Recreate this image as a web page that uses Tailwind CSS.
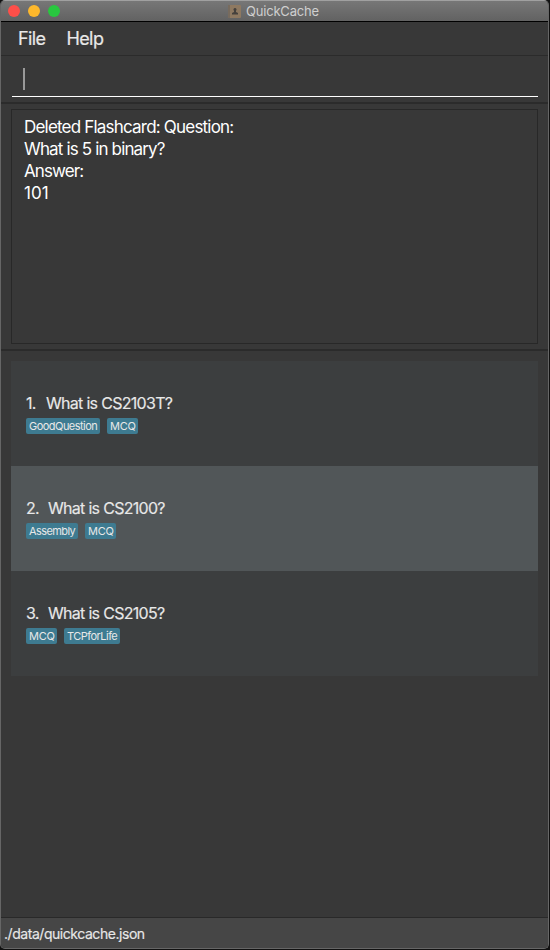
<!DOCTYPE html>
<html lang="en">
<head>
<meta charset="utf-8">
<title>QuickCache</title>
<script src="https://cdn.jsdelivr.net/npm/@tailwindcss/browser@4"></script>
</head>
<body class="bg-[#111] font-['Inter','Liberation_Sans',sans-serif] overflow-hidden">
<div class="w-[549px] h-[949px] flex flex-col bg-[#383838] rounded-[5px] border-l border-r border-b border-[#666] overflow-hidden text-[#e8e8e8]">
  <header class="relative h-[22px] shrink-0 flex items-center justify-center gap-[5px] bg-linear-to-b from-[#777] to-[#626262] border-t border-t-[#a0a0a0] border-b border-b-black">
    <div class="absolute left-[7px] top-[4px] flex gap-2">
      <span class="size-3 rounded-full bg-[#ff4f49]"></span>
      <span class="size-3 rounded-full bg-[#fdb82c]"></span>
      <span class="size-3 rounded-full bg-[#28c73f]"></span>
    </div>
    <svg class="w-[13px] h-[13px]" viewBox="0 0 13 13"><rect width="13" height="13" rx="1" fill="#8e7961"/><rect width="2" height="13" fill="#776b5e"/><path d="M7 3a1.6 1.6 0 0 1 1 2.8V7l2 1v1.5H4V8l2-1V5.800A1.600 1.600 0 0 1 7 3Z" fill="#45413d"/></svg>
    <h1 class="w-[75px] whitespace-nowrap text-[13px] leading-5 text-[#cfcfcf] tracking-[-0.2px]">QuickCache</h1>
  </header>
  <nav class="h-[34px] shrink-0 border-b border-[#2b2b2b] flex items-center gap-[21px] pl-[17px] text-[18px] tracking-[-0.6px] [-webkit-text-stroke:0.2px]">
    <span>File</span><span>Help</span>
  </nav>
  <div class="h-[48px] shrink-0 pl-[11px] pr-[10px] border-b-2 border-[#2b2b2b]">
    <div class="h-[41px] border-b border-white pl-[11px] pt-[12px]"><div class="w-[2px] h-[22px] bg-[#999]"></div></div>
  </div>
  <section class="h-[247px] shrink-0 pt-[5px] pb-[6px] px-[10px] border-b-2 border-[#2b2b2b]">
    <div class="w-[527px] h-[235px] border border-[#282828] pl-3 pt-[6px] text-[17px] leading-[22px] text-white tracking-[-0.8px]">
      <p>Deleted Flashcard: Question:</p><p class="tracking-[-0.85px]">What is 5 in binary?</p><p class="tracking-[-0.9px]">Answer:</p><p class="tracking-[0.1px]">101</p>
    </div>
  </section>
  <main class="grow pt-[10px] px-[10px]">
    <article class="w-[527px] h-[105px] bg-[#3c3e3f] pl-[15px] pt-[31px]">
      <div class="flex text-[16px] leading-[22px] tracking-[-0.7px] [-webkit-text-stroke:0.15px]"><span class="w-[20px]">1.</span><span>What is CS2103T?</span></div>
      <div class="flex gap-[7px] mt-[4px] text-[11px] leading-4 tracking-[-0.2px]"><span class="w-[74px] h-4 rounded-[2px] bg-[#3e7b91] pl-[3px] tracking-[-0.53px]">GoodQuestion</span><span class="w-[31px] h-4 rounded-[2px] bg-[#3e7b91] pl-[3px]">MCQ</span></div>
    </article>
    <article class="w-[527px] h-[105px] bg-[#515658] pl-[15px] pt-[31px]">
      <div class="flex text-[16px] leading-[22px] tracking-[-0.7px] [-webkit-text-stroke:0.15px]"><span class="w-[22px]">2.</span><span>What is CS2100?</span></div>
      <div class="flex gap-[7px] mt-[4px] text-[11px] leading-4 tracking-[-0.2px]"><span class="w-[52px] h-4 rounded-[2px] bg-[#3e7b91] pl-[3px] tracking-[-0.6px]">Assembly</span><span class="w-[31px] h-4 rounded-[2px] bg-[#3e7b91] pl-[3px]">MCQ</span></div>
    </article>
    <article class="w-[527px] h-[105px] bg-[#3c3e3f] pl-[15px] pt-[31px]">
      <div class="flex text-[16px] leading-[22px] tracking-[-0.7px] [-webkit-text-stroke:0.15px]"><span class="w-[22px]">3.</span><span>What is CS2105?</span></div>
      <div class="flex gap-[7px] mt-[4px] text-[11px] leading-4 tracking-[-0.2px]"><span class="w-[31px] h-4 rounded-[2px] bg-[#3e7b91] pl-[3px]">MCQ</span><span class="w-[56px] h-4 rounded-[2px] bg-[#3e7b91] pl-[3px] tracking-[-0.53px]">TCPforLife</span></div>
    </article>
  </main>
  <footer class="h-[31px] shrink-0 border-t border-[#292929] bg-[#464646] pl-[3px] pt-[5px] text-[14px] leading-[22px] tracking-[-0.45px] [-webkit-text-stroke:0.15px]">./data/quickcache.json</footer>
</div>
</body>
</html>
